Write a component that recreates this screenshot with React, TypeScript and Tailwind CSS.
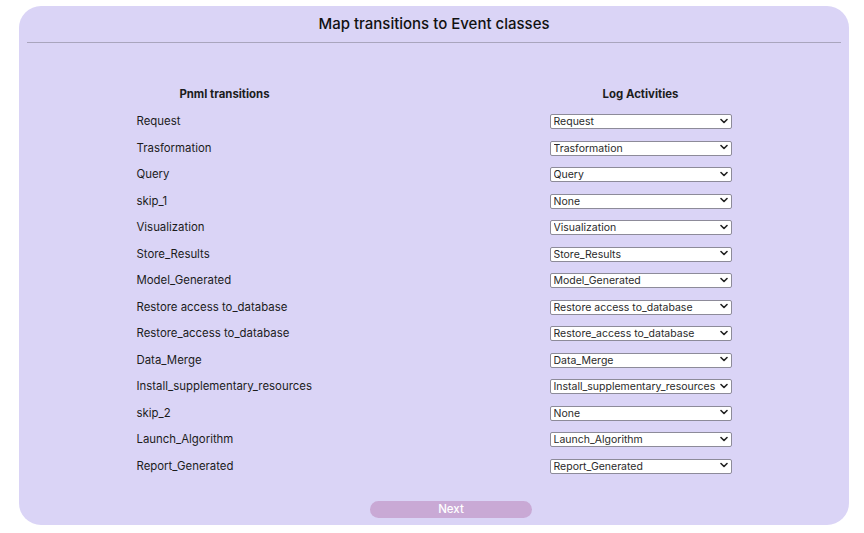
import React from 'react';

const rows: [string, string][] = [
  ['Request', 'Request'],
  ['Trasformation', 'Trasformation'],
  ['Query', 'Query'],
  ['skip_1', 'None'],
  ['Visualization', 'Visualization'],
  ['Store_Results', 'Store_Results'],
  ['Model_Generated', 'Model_Generated'],
  ['Restore access to_database', 'Restore access to_database'],
  ['Restore_access to_database', 'Restore_access to_database'],
  ['Data_Merge', 'Data_Merge'],
  ['Install_supplementary_resources', 'Install_supplementary_resources'],
  ['skip_2', 'None'],
  ['Launch_Algorithm', 'Launch_Algorithm'],
  ['Report_Generated', 'Report_Generated'],
];

const options = [
  'None',
  'Request',
  'Trasformation',
  'Query',
  'Visualization',
  'Store_Results',
  'Model_Generated',
  'Restore access to_database',
  'Restore_access to_database',
  'Data_Merge',
  'Install_supplementary_resources',
  'Launch_Algorithm',
  'Report_Generated',
];

const Chevron = () => (
  <svg
    className="pointer-events-none absolute right-[4px] top-1/2 -translate-y-1/2"
    width="8"
    height="6"
    viewBox="0 0 8 6"
    fill="none"
  >
    <path d="M1 1.5 L4 4.5 L7 1.5" stroke="#222" strokeWidth="1.6" strokeLinecap="round" strokeLinejoin="round" />
  </svg>
);

const ActivitySelect: React.FC<{ value: string }> = ({ value }) => (
  <div className="relative w-[182px] h-[15px]">
    <select
      defaultValue={value}
      className="appearance-none w-full h-full bg-white border border-[#8d8b99] rounded-[2px] pl-[3px] pr-[12px] text-[10.5px] leading-[13px] text-[#2a2a2a] outline-none"
    >
      {options.map((o) => (
        <option key={o} value={o}>
          {o}
        </option>
      ))}
    </select>
    <Chevron />
  </div>
);

const App: React.FC = () => {
  return (
    <div
      className="w-full h-[533px] bg-white pt-[6px] pl-[19px] pr-[15px]"
      style={{ fontFamily: 'Inter, "Noto Sans", sans-serif' }}
    >
      <div className="h-[519px] rounded-[22px] bg-[#dad4f6] flex flex-col">
        {/* Title */}
        <div className="h-[36px] flex items-center justify-center text-[15px] font-medium text-[#111]">
          Map transitions to Event classes
        </div>
        <div className="mx-[8px] h-px bg-[#a9a5bd]" />

        {/* Mapping table */}
        <div className="w-[595px] mx-auto mt-[38px] grid grid-cols-[176px_1fr_182px] auto-rows-[26.5px] items-center text-[11.4px] text-[#1c1c1c]">
          <div className="text-center font-bold pt-[1px]">Pnml transitions</div>
          <div />
          <div className="text-center font-bold pt-[1px]">Log Activities</div>
          {rows.map(([t, a]) => (
            <React.Fragment key={t}>
              <div className="whitespace-nowrap pt-[2px]">{t}</div>
              <div />
              <ActivitySelect value={a} />
            </React.Fragment>
          ))}
        </div>

        {/* Next */}
        <div className="flex justify-center mt-[22px]">
          <button className="ml-[34px] w-[162px] h-[17px] rounded-full bg-[#c9a9d5] text-white text-[11.5px] font-medium">
            Next
          </button>
        </div>
      </div>
    </div>
  );
};

export default App;
